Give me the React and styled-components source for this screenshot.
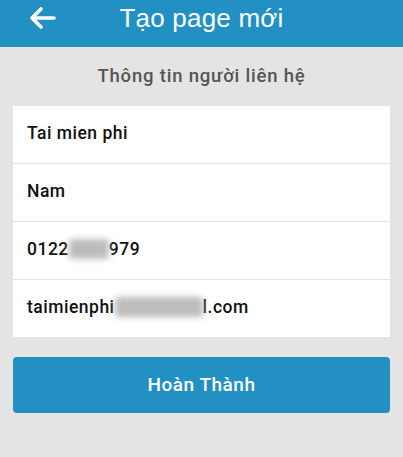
import styled, { createGlobalStyle } from "styled-components";

const GlobalStyle = createGlobalStyle`
  html, body {
    margin: 0;
    padding: 0;
    background: #e4e4e4;
  }
  body {
    font-family: "Liberation Sans", Arial, sans-serif;
  }
`;

const Page = styled.div`
  display: flex;
  flex-direction: column;
  width: 403px;
  min-height: 457px;
  background: #e4e4e4;
`;

const Header = styled.div`
  position: relative;
  display: flex;
  align-items: center;
  justify-content: center;
  height: 47px;
  background: #2290c2;
  box-sizing: border-box;
  padding-bottom: 10px;
`;

const BackButton = styled.div`
  position: absolute;
  left: 28px;
  top: 5px;
  width: 30px;
  height: 26px;
  cursor: pointer;
`;

const Title = styled.div`
  font-size: 26px;
  color: white;
  letter-spacing: 0.2px;
`;

const SectionTitle = styled.div`
  display: flex;
  align-items: center;
  justify-content: center;
  height: 59px;
  font-family: Roboto, "Liberation Sans", sans-serif;
  font-size: 18.5px;
  font-weight: 500;
  letter-spacing: 0.8px;
  color: #555;
  padding-bottom: 2px;
  box-sizing: border-box;
`;

const Card = styled.div`
  display: flex;
  flex-direction: column;
  margin: 0 13px;
  background: white;
`;

const Row = styled.div`
  display: flex;
  align-items: center;
  box-sizing: border-box;
  height: ${({ first }) => (first ? 57 : 58)}px;
  padding: 0 14px 3px;
  font-family: Roboto, "Liberation Sans", sans-serif;
  font-size: 17.5px;
  font-weight: 500;
  letter-spacing: 0.5px;
  color: #111;
  border-top: ${({ first }) => (first ? "none" : "1px solid #e2e2e2")};
`;

const Blurred = styled.span`
  display: inline-block;
  width: ${({ w }) => w}px;
  height: 20px;
  background: #bcbcbc;
  filter: blur(3px);
  border-radius: 3px;
`;

const SubmitButton = styled.button`
  margin: 20px 13px 0;
  height: 56px;
  border: none;
  border-radius: 4px;
  background: #2290c2;
  color: white;
  font-family: Roboto, "Liberation Sans", sans-serif;
  font-size: 19px;
  font-weight: 500;
  letter-spacing: 0.5px;
  cursor: pointer;
  padding-bottom: 2px;
`;

function BackArrow() {
  return (
    <svg width="30" height="26" viewBox="0 0 30 26" fill="none">
      <path
        d="M4 13 H26 M13 4 L4 13 L13 22"
        stroke="white"
        strokeWidth="3.6"
        strokeLinecap="round"
        strokeLinejoin="round"
      />
    </svg>
  );
}

export default function App() {
  return (
    <>
      <GlobalStyle />
      <Page>
        <Header>
          <BackButton>
            <BackArrow />
          </BackButton>
          <Title>Tạo page mới</Title>
        </Header>
        <SectionTitle>Thông tin người liên hệ</SectionTitle>
        <Card>
          <Row first>Tai mien phi</Row>
          <Row>Nam</Row>
          <Row>
            0122
            <Blurred w={40} />
            979
          </Row>
          <Row>
            taimienphi
            <Blurred w={88} />
            l.com
          </Row>
        </Card>
        <SubmitButton>Hoàn Thành</SubmitButton>
      </Page>
    </>
  );
}
